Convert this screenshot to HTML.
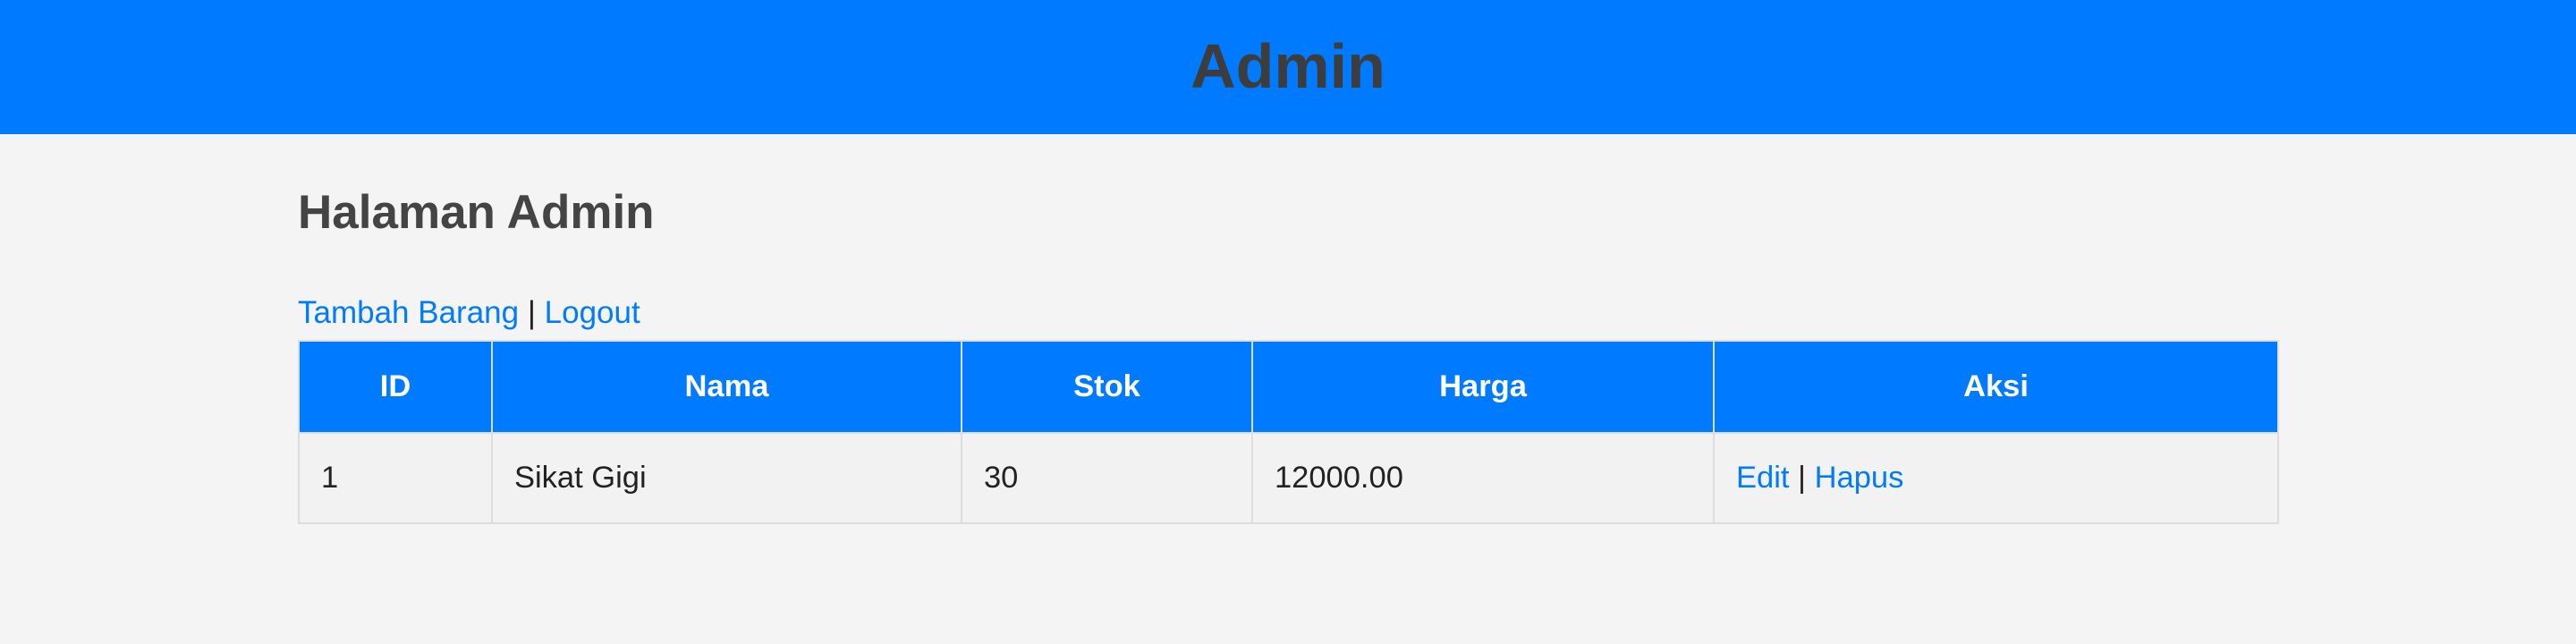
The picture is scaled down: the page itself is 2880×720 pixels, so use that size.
<!DOCTYPE html>
<html><head><style>
*{margin:0;padding:0;box-sizing:border-box}
body{width:2880px;height:720px;background:#f4f4f4;font-family:"Liberation Sans",Arial,sans-serif;overflow:hidden}
.hd{height:150px;background:#007bff;text-align:center}
.hd h1{font-size:70px;line-height:148px;color:#3d3d3d;font-weight:bold}
.wrap{position:absolute;left:333px;top:0;width:2215px}
h2{position:absolute;top:207px;left:0;font-size:53px;color:#444;white-space:nowrap}
.links{position:absolute;top:330px;left:0;font-size:35px;color:#222;white-space:nowrap}
.links a{color:#007bff;text-decoration:none}
table{position:absolute;top:380px;left:0;width:2215px;border-collapse:collapse;font-size:34.5px}
th,td{border:2px solid #ddd}
th{background:#007bff;color:#fff;height:103px;font-weight:bold;border-color:#ddd}
td{background:#f2f2f2;color:#222;height:101px;padding-left:24px;text-align:left}
td a{color:#007bff;text-decoration:none}
</style></head><body>
<div class="hd"><h1>Admin</h1></div>
<div class="wrap">
<h2>Halaman Admin</h2>
<div class="links"><a>Tambah Barang</a> | <a>Logout</a></div>
<table>
<tr><th style="width:216px">ID</th><th style="width:525px">Nama</th><th style="width:325px">Stok</th><th style="width:516px">Harga</th><th>Aksi</th></tr>
<tr><td>1</td><td>Sikat Gigi</td><td>30</td><td>12000.00</td><td><a>Edit</a> | <a>Hapus</a></td></tr>
</table>
</div>
</body></html>
